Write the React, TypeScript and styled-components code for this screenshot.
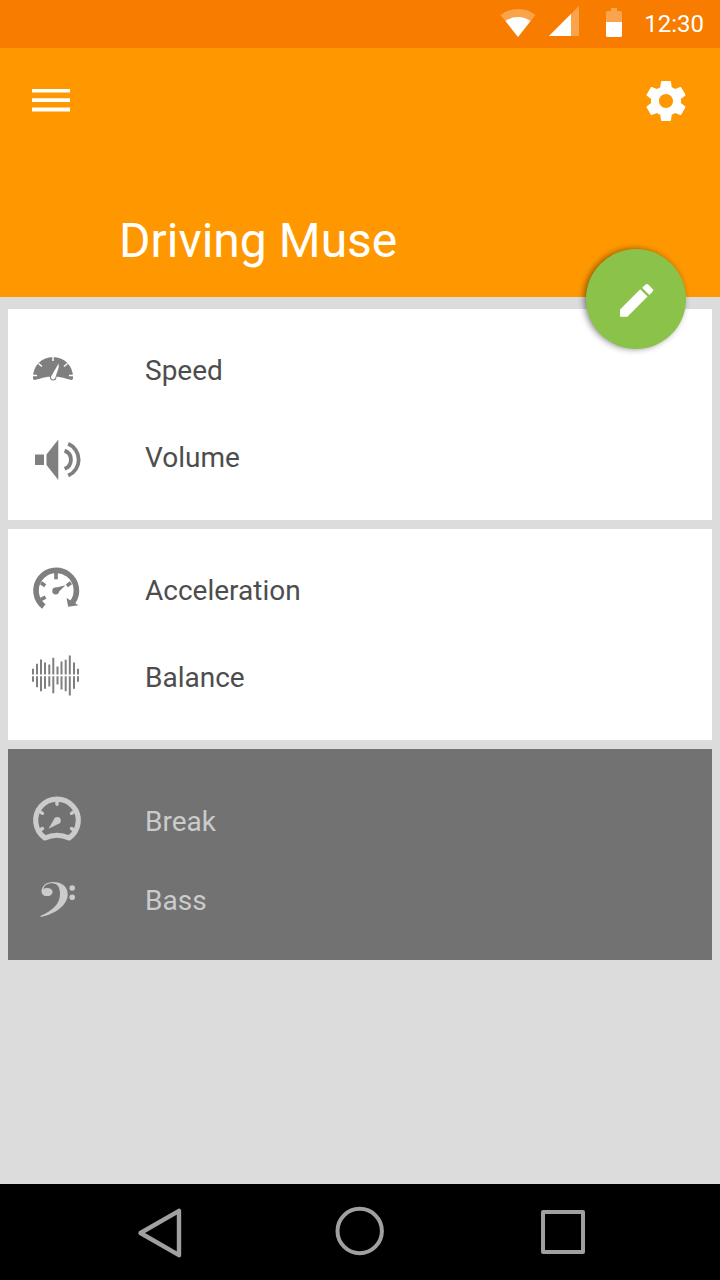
import React from "react";
import styled, { createGlobalStyle } from "styled-components";

const GlobalStyle = createGlobalStyle`
  * { box-sizing: border-box; }
  body { margin: 0; background: #dcdcdc; font-family: Roboto, "Liberation Sans", sans-serif; }
  button { border: 0; padding: 0; margin: 0; background: none; color: inherit; font: inherit; cursor: pointer; }
  svg { display: block; overflow: visible; }
`;

const Screen = styled.div`
  display: flex;
  flex-direction: column;
  min-height: 100vh;
  background: #dcdcdc;
`;

const StatusBar = styled.div`
  display: flex;
  align-items: center;
  justify-content: flex-end;
  height: 48px;
  padding-right: 16px;
  background: #f77c00;
  color: #fff;
`;

const StatusIcons = styled.svg`
  width: 124px;
  height: 48px;
  margin-right: 20px;
`;

const Clock = styled.time`
  font-size: 24px;
  line-height: 48px;
`;

const Header = styled.header`
  position: relative;
  padding: 29px 30px 28px 32px;
  background: #ff9800;
  color: #fff;
`;

const Toolbar = styled.div`
  display: flex;
  align-items: center;
  justify-content: space-between;
`;

const IconButton = styled.button`
  display: flex;
  align-items: center;
  width: 48px;
  height: 48px;
`;

const Title = styled.h1`
  margin: 88px 0 0 87px;
  font-size: 48px;
  line-height: 56px;
  font-weight: 400;
`;

const Fab = styled.button`
  position: absolute;
  right: 34px;
  bottom: -52px;
  display: flex;
  align-items: center;
  justify-content: center;
  width: 100px;
  height: 100px;
  border-radius: 50%;
  && { background: #8bc34a; }
  box-shadow: -2px 0 6px rgba(0, 0, 0, 0.45);
`;

const Cards = styled.main`
  flex: 1;
  display: flex;
  flex-direction: column;
  gap: 9px;
  padding: 12px 8px;
`;

const Card = styled.ul<{ $dark?: boolean }>`
  margin: 0;
  padding: ${(p) => (p.$dark ? "33px 24px 20px" : "18px 24px 19px")};
  list-style: none;
  background: ${(p) => (p.$dark ? "#727272" : "#fff")};
  color: ${(p) => (p.$dark ? "#cbcbcb" : "#4d4d4d")};
  --icon: ${(p) => (p.$dark ? "#cbcbcb" : "#7f7f7f")};
`;

const Row = styled.li<{ $short?: boolean }>`
  display: flex;
  align-items: center;
  gap: 65px;
  height: ${(p) => (p.$short ? 79 : 87)}px;
  font-size: 28px;
  line-height: 32px;
`;

const RowIcon = styled.svg`
  flex: none;
  width: 48px;
  height: 48px;
  color: var(--icon);
`;

const NavBar = styled.nav`
  display: flex;
  justify-content: center;
  padding: 24px 16px;
  background: #000;
  color: #a0a0a0;
`;

const NavButtons = styled.div`
  display: flex;
  justify-content: space-between;
  width: 100%;
  max-width: 452px;
`;

const line = { fill: "none", stroke: "currentColor" };

const SpeedIcon = () => (
  <RowIcon viewBox="0 0 48 48" aria-hidden="true">
    <path
      fill="currentColor"
      d="M1 30a20 20 0 0 1 40 0v1.200q0 2.200-2.500 1.600Q30 30.400 26 29.800H16Q12 30.400 3.500 32.800Q1 33.400 1 31.200z"
    />
    <path stroke="#fff" strokeWidth="1.500" d="M21 9v5M6.500 16.500l3.500 3M35.500 16.500l-3.500 3M.5 28.600h4.500M41.500 28.600h-4.500" />
    <circle cx="21.200" cy="30.300" r="3.200" fill="currentColor" />
    <path fill="#fff" d="M26.600 16.500l.1 4-3.500 10.500a2.200 2.200 0 0 1-4.100-1.600z" />
  </RowIcon>
);

const VolumeIcon = () => (
  <RowIcon viewBox="0 0 48 48" aria-hidden="true">
    <path fill="currentColor" d="M3 20.500h9v10.500H3zM14.500 20.500L26.300 5.500v40.500L14.500 31z" />
    <path {...line} strokeWidth="3.800" d="M32.600 16.600a9.700 9.700 0 0 1 0 18.200M36.200 9.800a17.300 17.300 0 0 1 0 31.800" />
  </RowIcon>
);

const AccelerationIcon = () => (
  <RowIcon viewBox="0 0 48 48" aria-hidden="true">
    <path {...line} strokeWidth="5.600" d="M11.800 39.500A20.200 20.200 0 1 1 40.500 35.500" />
    <path fill="currentColor" d="M34.600 31l11.900 7.200-10.400 1.600z" />
    <path {...line} strokeWidth="3.600" d="M24 6v6.200M9 15.800l4.200 3M39 15.800l-4.200 3M9 32.300l4.600-2.200" />
    <circle cx="23.700" cy="24" r="3.400" fill="currentColor" />
    <path fill="currentColor" d="M22.500 20.900l11-2.600-8.300 8z" />
  </RowIcon>
);

const bars: [number, number, number][] = [
  [1, 15.3, 28.3], [5, 10.3, 33.7], [9, 6, 37.7], [13, 9, 35.3], [17.3, 11, 33], [21.3, 4.3, 39.7],
  [25.5, 13, 31], [29.5, 8, 36], [33.7, 6.3, 37.7], [37.8, 2, 42], [42, 9, 35.3], [46, 15.3, 28.3],
];

const BalanceIcon = () => (
  <RowIcon viewBox="0 0 48 48" aria-hidden="true">
    {bars.map(([x, top, bottom]) => (
      <path key={x} {...line} strokeWidth="2" d={`M${x} ${top - 0.5}V20.500M${x} 22.200V${bottom - 0.5}`} />
    ))}
  </RowIcon>
);

const BreakIcon = () => (
  <RowIcon viewBox="0 0 48 48" aria-hidden="true">
    <path
      {...line}
      strokeWidth="5.200"
      strokeLinejoin="round"
      d="M13 40A21.300 21.300 0 1 1 37 40Q25 34.500 13 40z"
    />
    <path {...line} strokeWidth="3.400" strokeLinecap="round" d="M25 4v2.300M9 14.300l1.500 1M41 14.300l-1.500 1M9 31.500l1.500-1M41 31.500l-1.500-1" />
    <circle cx="25.300" cy="22.500" r="3.500" fill="currentColor" />
    <path fill="currentColor" d="M22.300 20.800l-5.800 9.900 10.200-5z" />
  </RowIcon>
);

const BassIcon = () => (
  <RowIcon viewBox="0 0 48 48" aria-hidden="true" fill="currentColor">
    <path d="M9.600 15C9.300 9 14 5 21 5c9 0 14.700 4.800 14.700 12.300C35.700 27.500 25 36.500 8.900 40l-.6-.9C20.500 33.500 28 27 28 17c0-6.800-2.700-10.700-8-10.700-4.500 0-8 2.300-8.300 5.200z" />
    <ellipse cx="15.100" cy="15" rx="5.500" ry="4.100" />
    <circle cx="40.200" cy="11" r="2.800" />
    <circle cx="40.200" cy="20.300" r="2.800" />
  </RowIcon>
);

const groups = [
  { dark: false, items: [["Speed", SpeedIcon], ["Volume", VolumeIcon]] },
  { dark: false, items: [["Acceleration", AccelerationIcon], ["Balance", BalanceIcon]] },
  { dark: true, items: [["Break", BreakIcon], ["Bass", BassIcon]] },
] as { dark: boolean; items: [string, React.FC][] }[];

export default function App() {
  return (
    <Screen>
      <GlobalStyle />
      <StatusBar>
        <StatusIcons viewBox="0 0 124 48" fill="#fff" aria-hidden="true">
          <path opacity=".3" d="M18 37L.5 15Q8 9 18 9t17.500 6z" />
          <path d="M18 37L5.500 21Q11 17 18 17t12.500 4z" />
          <path opacity=".3" d="M49 36L79 6v30z" />
          <path d="M49 36l22-22v22z" />
          <path opacity=".3" d="M106 22V12.500q0-1.500 1.500-1.500h3.500V8h6v3h3.500q1.500 0 1.500 1.500V22z" />
          <path d="M106 22h16v13.500q0 1.500-1.500 1.500h-13q-1.500 0-1.500-1.500z" />
        </StatusIcons>
        <Clock>12:30</Clock>
      </StatusBar>
      <Header>
        <Toolbar>
          <IconButton aria-label="Menu">
            <svg width="38" height="24" viewBox="0 0 38 24" fill="#fff">
              <path d="M0 0h38v3.500H0zM0 9.300h38v3.700H0zM0 18.500h38v4H0z" />
            </svg>
          </IconButton>
          <IconButton aria-label="Settings">
            <svg width="48" height="48" viewBox="0 0 24 24" fill="#fff">
              <path d="M19.430 12.980c.04-.32.07-.64.07-.98s-.03-.66-.07-.98l2.110-1.650c.19-.15.24-.42.12-.64l-2-3.460c-.12-.22-.39-.3-.61-.22l-2.490 1c-.52-.4-1.080-.73-1.690-.98l-.38-2.650C14.460 2.180 14.250 2 14 2h-4c-.25 0-.46.18-.49.42l-.38 2.650c-.61.25-1.170.59-1.690.98l-2.490-1c-.23-.09-.49 0-.61.22l-2 3.460c-.13.22-.07.49.12.64l2.110 1.650c-.04.32-.07.65-.07.98s.03.66.07.98l-2.110 1.650c-.19.15-.24.42-.12.64l2 3.460c.12.22.39.3.61.22l2.490-1c.52.4 1.080.73 1.690.98l.38 2.650c.03.24.24.42.49.42h4c.25 0 .46-.18.49-.42l.38-2.650c.61-.25 1.170-.59 1.690-.98l2.490 1c.23.09.49 0 .61-.22l2-3.460c.12-.22.07-.49-.12-.64l-2.110-1.650zM12 15.500c-1.930 0-3.500-1.570-3.500-3.500s1.570-3.500 3.500-3.500 3.500 1.570 3.500 3.500-1.570 3.500-3.500 3.500z" />
            </svg>
          </IconButton>
        </Toolbar>
        <Title>Driving Muse</Title>
        <Fab aria-label="Edit">
          <svg width="44" height="44" viewBox="0 0 24 24" fill="#fff">
            <path d="M3.300 17.700V21.700h4L18.300 10.700l-4-4zM21.100 7.900c.39-.39.39-1.020 0-1.410l-2.440-2.440c-.39-.39-1.020-.39-1.410 0l-1.900 1.800 3.950 3.950z" />
          </svg>
        </Fab>
      </Header>
      <Cards>
        {groups.map((group, index) => (
          <Card key={index} $dark={group.dark}>
            {group.items.map(([name, Icon]) => (
              <Row key={name} $short={group.dark}>
                <Icon />
                <span>{name}</span>
              </Row>
            ))}
          </Card>
        ))}
      </Cards>
      <NavBar>
        <NavButtons>
          <IconButton aria-label="Back">
            <svg width="48" height="48" viewBox="0 0 48 48" {...line} strokeWidth="4.400" strokeLinejoin="round">
              <path d="M6.500 25L45 2.800v44.400z" />
            </svg>
          </IconButton>
          <IconButton aria-label="Home">
            <svg width="48" height="48" viewBox="0 0 48 48" {...line} strokeWidth="4">
              <circle cx="23.700" cy="23" r="22.200" />
            </svg>
          </IconButton>
          <IconButton aria-label="Recent apps">
            <svg width="48" height="48" viewBox="0 0 48 48" {...line} strokeWidth="4" strokeLinejoin="round">
              <path d="M5 4h40v40H5z" />
            </svg>
          </IconButton>
        </NavButtons>
      </NavBar>
    </Screen>
  );
}
